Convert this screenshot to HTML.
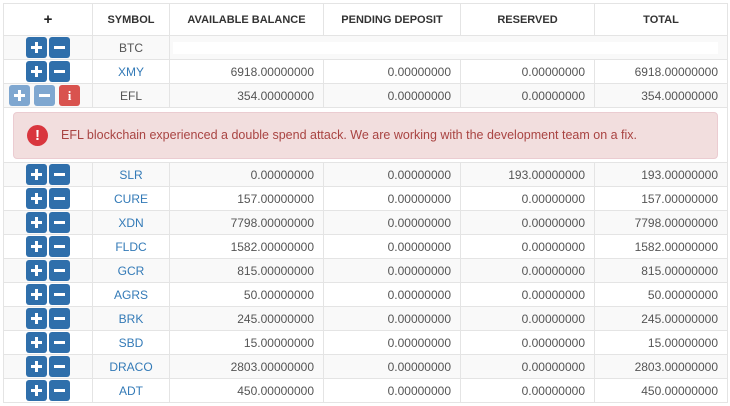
<!DOCTYPE html>
<html><head><style>
body{margin:0;background:#fff;font-family:"Liberation Sans",sans-serif;font-size:12px;color:#555;}
table{position:absolute;left:3px;top:3px;border-collapse:collapse;width:724px;table-layout:fixed;}
td,th{border:1px solid #e4e4e4;height:23px;padding:0 9px;white-space:nowrap;}
th{height:31px;font-weight:bold;color:#333;font-size:11px;text-align:center;}
td{text-align:right;}
td.c{text-align:center;}
tr.g td{background:#f9f9f9;}
a{color:#337ab7;}
.b{display:inline-block;width:21px;height:21px;border-radius:3px;background:#2f6fab;color:#fff;vertical-align:middle;position:relative;margin:0 1px;}
.b.l{background:#7fa7d0;}
.b.r{background:#d9534f;}
.b::before{content:"";position:absolute;left:5px;top:9px;width:11px;height:3px;background:#fff;}
.b.p::after{content:"";position:absolute;left:9px;top:5px;width:3px;height:11px;background:#fff;}
.b.r::before{display:none;}
.b.r span{position:absolute;left:0;right:0;top:3px;text-align:center;font-weight:bold;font-size:13px;font-family:"Liberation Serif",serif;}
.alert{margin:3px 0 3px 0;background:#f2dede;border:1px solid #ebccd1;border-radius:4px;height:45px;color:#a94442;font-size:12.5px;display:flex;align-items:center;text-align:left;}
.ic{width:21px;height:21px;border-radius:50%;background:#d9363e;color:#fff;font-weight:bold;text-align:center;line-height:21px;font-size:15px;margin:0 13px 0 13px;}
</style></head><body>
<table>
<colgroup><col style="width:89px"><col style="width:77px"><col style="width:154px"><col style="width:137px"><col style="width:134px"><col style="width:133px"></colgroup>
<tr><th style="font-size:15px;font-weight:bold;color:#222">+</th><th>SYMBOL</th><th>AVAILABLE BALANCE</th><th>PENDING DEPOSIT</th><th>RESERVED</th><th>TOTAL</th></tr>
<tr class="g"><td class="c"><span class="b p"></span><span class="b"></span></td><td class="c">BTC</td><td colspan="4" style="padding:0 9px 0 3px"><div style="background:#fff;height:12px"></div></td></tr>
<tr><td class="c"><span class="b p"></span><span class="b"></span></td><td class="c"><a>XMY</a></td><td>6918.00000000</td><td>0.00000000</td><td>0.00000000</td><td>6918.00000000</td></tr>
<tr class="g"><td class="c" style="padding:0 0 0 4px;text-align:left"><span class="b p l"></span><span class="b l" style="margin-left:3px"></span><span class="b r" style="margin-left:3px"><span>i</span></span></td><td class="c">EFL</td><td>354.00000000</td><td>0.00000000</td><td>0.00000000</td><td>354.00000000</td></tr>
<tr><td colspan="6" style="height:54px;padding:0 9px"><div class="alert"><div class="ic">!</div>EFL blockchain experienced a double spend attack. We are working with the development team on a fix.</div></td></tr>
<tr class="g"><td class="c"><span class="b p"></span><span class="b"></span></td><td class="c"><a>SLR</a></td><td>0.00000000</td><td>0.00000000</td><td>193.00000000</td><td>193.00000000</td></tr>
<tr><td class="c"><span class="b p"></span><span class="b"></span></td><td class="c"><a>CURE</a></td><td>157.00000000</td><td>0.00000000</td><td>0.00000000</td><td>157.00000000</td></tr>
<tr class="g"><td class="c"><span class="b p"></span><span class="b"></span></td><td class="c"><a>XDN</a></td><td>7798.00000000</td><td>0.00000000</td><td>0.00000000</td><td>7798.00000000</td></tr>
<tr><td class="c"><span class="b p"></span><span class="b"></span></td><td class="c"><a>FLDC</a></td><td>1582.00000000</td><td>0.00000000</td><td>0.00000000</td><td>1582.00000000</td></tr>
<tr class="g"><td class="c"><span class="b p"></span><span class="b"></span></td><td class="c"><a>GCR</a></td><td>815.00000000</td><td>0.00000000</td><td>0.00000000</td><td>815.00000000</td></tr>
<tr><td class="c"><span class="b p"></span><span class="b"></span></td><td class="c"><a>AGRS</a></td><td>50.00000000</td><td>0.00000000</td><td>0.00000000</td><td>50.00000000</td></tr>
<tr class="g"><td class="c"><span class="b p"></span><span class="b"></span></td><td class="c"><a>BRK</a></td><td>245.00000000</td><td>0.00000000</td><td>0.00000000</td><td>245.00000000</td></tr>
<tr><td class="c"><span class="b p"></span><span class="b"></span></td><td class="c"><a>SBD</a></td><td>15.00000000</td><td>0.00000000</td><td>0.00000000</td><td>15.00000000</td></tr>
<tr class="g"><td class="c"><span class="b p"></span><span class="b"></span></td><td class="c"><a>DRACO</a></td><td>2803.00000000</td><td>0.00000000</td><td>0.00000000</td><td>2803.00000000</td></tr>
<tr><td class="c"><span class="b p"></span><span class="b"></span></td><td class="c"><a>ADT</a></td><td>450.00000000</td><td>0.00000000</td><td>0.00000000</td><td>450.00000000</td></tr>
</table>
</body></html>
